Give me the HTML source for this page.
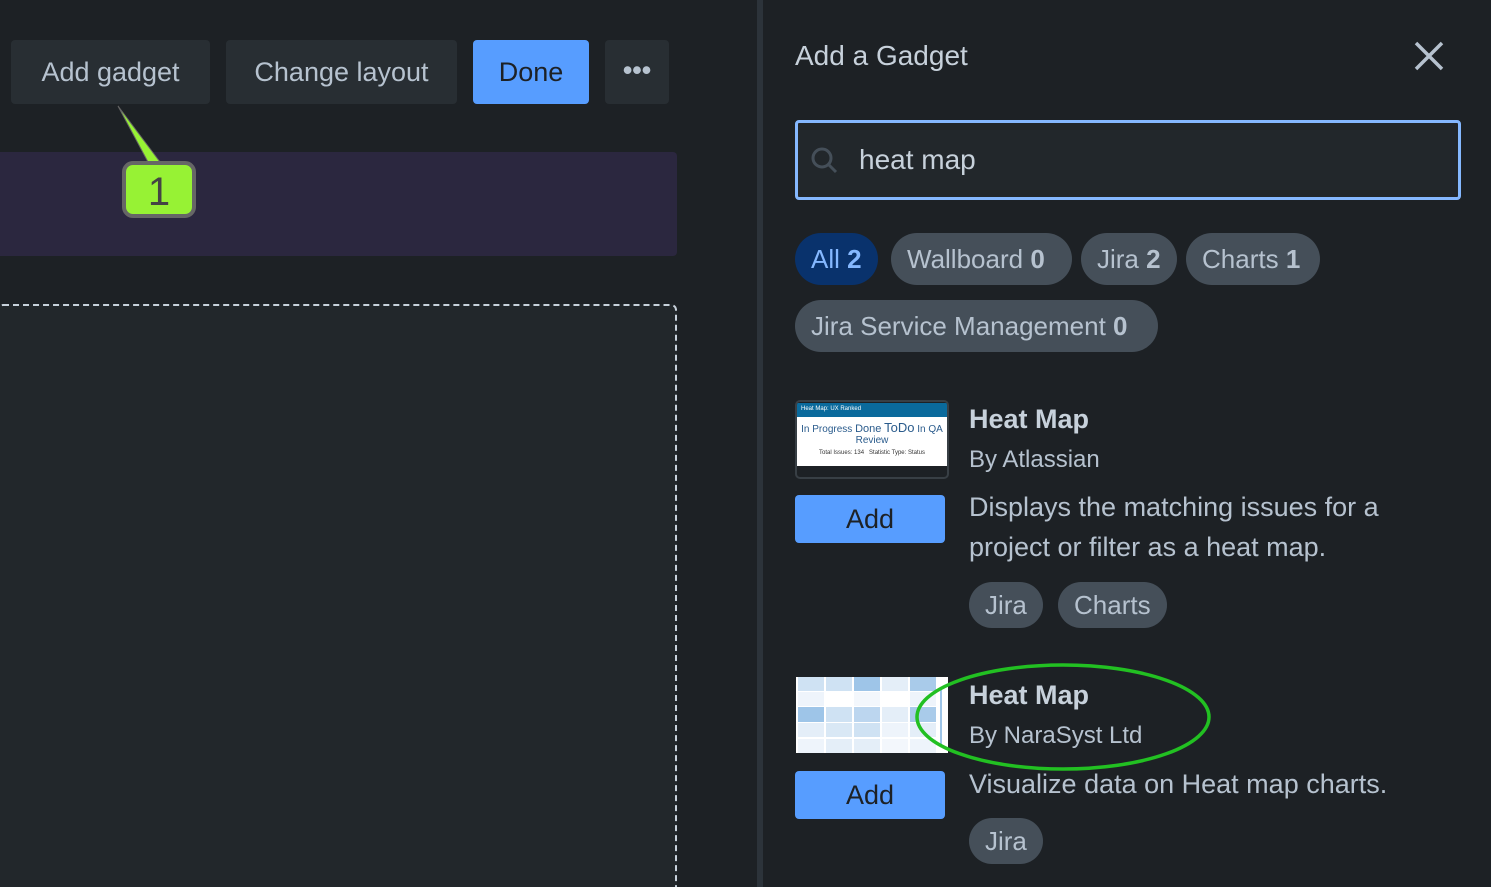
<!DOCTYPE html>
<html style="width:1491px;height:887px;overflow:hidden"><head><meta charset="utf-8"><style>
*{margin:0;padding:0;box-sizing:border-box}
body{width:1491px;height:887px;background:#1d2125;font-family:"Liberation Sans",sans-serif;color:#b6c2cf;position:relative;overflow:hidden}
.a{position:absolute}
.btn{position:absolute;top:40px;height:64px;background:#282e33;border-radius:4px;font-size:27px;line-height:64px;text-align:center;color:#b6c2cf}
.pill{position:absolute;height:52px;border-radius:26px;background:#454f59;font-size:26px;line-height:52px;padding:0 16px;color:#b6c2cf;white-space:nowrap}
.pill b{font-weight:bold}
.t{position:absolute;white-space:nowrap}
.add{position:absolute;left:795px;width:150px;height:48px;background:#579dff;border-radius:4px;color:#1d2125;font-size:27px;line-height:48px;text-align:center}
</style></head><body>
<div class="btn" style="left:11px;width:199px">Add gadget</div>
<div class="btn" style="left:226px;width:231px">Change layout</div>
<div class="btn" style="left:473px;width:116px;background:#579dff;color:#1d2125">Done</div>
<div class="btn" style="left:605px;width:64px;font-weight:bold;line-height:60px">•••</div>
<div class="a" style="left:0;top:152px;width:677px;height:104px;background:#2b273f;border-radius:0 4px 4px 0"></div>
<div class="a" style="left:-3px;top:304px;width:680px;height:600px;background:#22272b;border:2px dashed #c7d1db;border-radius:6px"></div>
<svg class="a" style="left:110px;top:100px" width="100" height="130">
<polygon points="8,6 38,62 50,62" fill="#97f234" stroke="#666" stroke-width="1"/>
<rect x="14" y="63" width="70" height="53" rx="9" fill="#97f234" stroke="#666" stroke-width="4"/>
<text x="49" y="105" font-size="40" text-anchor="middle" fill="#444" font-family="Liberation Sans">1</text>
</svg>
<div class="a" style="left:757px;top:0;width:6px;height:887px;background:#2c333a"></div>
<div class="t" style="left:795px;top:40px;font-size:28px;color:#c7d1db">Add a Gadget</div>
<svg class="a" style="left:1413px;top:40px" width="32" height="32"><path d="M3 3L29 29M29 3L3 29" stroke="#b6c2cf" stroke-width="3.5"/></svg>
<div class="a" style="left:795px;top:120px;width:666px;height:80px;border:3px solid #85b8ff;border-radius:4px;background:#22272b"></div>
<svg class="a" style="left:810px;top:146px" width="30" height="30"><circle cx="12" cy="12" r="9" fill="none" stroke="#454f59" stroke-width="3"/><path d="M19 19L26 26" stroke="#454f59" stroke-width="3"/></svg>
<div class="t" style="left:859px;top:144px;font-size:28px;color:#c7d1db">heat map</div>
<div class="pill" style="left:795px;top:233px;background:#09326c;color:#85b8ff">All <b>2</b></div>
<div class="pill" style="left:891px;top:233px;width:181px">Wallboard <b>0</b></div>
<div class="pill" style="left:1081px;top:233px">Jira <b>2</b></div>
<div class="pill" style="left:1186px;top:233px;width:134px">Charts <b>1</b></div>
<div class="pill" style="left:795px;top:300px;width:363px">Jira Service Management <b>0</b></div>

<div class="a" style="left:795px;top:400px;width:154px;height:79px;border:2px solid #383f45;border-radius:5px;background:#1d2125;overflow:hidden">
<div style="height:14px;background:#0a6a9c;margin-top:1px;font-size:6px;color:#fff;padding:3px 4px">Heat Map: UX Ranked</div>
<div style="background:#fff;height:49px;text-align:center;color:#2a5b8c;font-size:10px;line-height:11px;padding-top:5px">In Progress <span style="font-size:11px">Done</span> <span style="font-size:13px">ToDo</span> In QA<br>Review<br><span style="font-size:6px;color:#333">Total Issues: 134 &nbsp; Statistic Type: Status</span></div>
</div>
<div class="add" style="top:495px">Add</div>
<div class="t" style="left:969px;top:404px;font-size:27px;font-weight:bold;color:#c7d1db">Heat Map</div>
<div class="t" style="left:969px;top:446px;font-size:24px">By Atlassian</div>
<div class="t" style="left:969px;top:487px;font-size:27px;line-height:40px">Displays the matching issues for a<br>project or filter as a heat map.</div>
<div class="pill" style="left:969px;top:582px;height:46px;line-height:46px">Jira</div>
<div class="pill" style="left:1058px;top:582px;height:46px;line-height:46px">Charts</div>

<svg class="a" style="left:796px;top:677px" width="152" height="76">
<rect width="152" height="76" fill="#fff"/>
<g fill="#cfe2f3">
<rect x="2" y="0" width="26" height="14"/><rect x="30" y="0" width="26" height="14"/><rect x="58" y="0" width="26" height="14" fill="#9ec5e8"/><rect x="86" y="0" width="26" height="14" fill="#e4eef8"/><rect x="114" y="0" width="26" height="14" fill="#a9cbea"/>
<rect x="2" y="15" width="26" height="14" fill="#eef4fb"/><rect x="30" y="15" width="26" height="14" fill="#fff"/><rect x="58" y="15" width="26" height="14" fill="#f3f7fc"/><rect x="86" y="15" width="26" height="14" fill="#fff"/><rect x="114" y="15" width="26" height="14" fill="#eef4fb"/>
<rect x="2" y="30" width="26" height="15" fill="#9ec5e8"/><rect x="30" y="30" width="26" height="15"/><rect x="58" y="30" width="26" height="15" fill="#bcd6ef"/><rect x="86" y="30" width="26" height="15" fill="#e4eef8"/><rect x="114" y="30" width="26" height="15" fill="#a9cbea"/>
<rect x="2" y="46" width="26" height="14" fill="#e4eef8"/><rect x="30" y="46" width="26" height="14" fill="#d9e8f5"/><rect x="58" y="46" width="26" height="14"/><rect x="86" y="46" width="26" height="14" fill="#eef4fb"/><rect x="114" y="46" width="26" height="14" fill="#e4eef8"/>
<rect x="2" y="62" width="26" height="14" fill="#eef4fb"/><rect x="30" y="62" width="26" height="14" fill="#e4eef8"/><rect x="58" y="62" width="26" height="14" fill="#e4eef8"/><rect x="86" y="62" width="26" height="14" fill="#f3f7fc"/><rect x="114" y="62" width="26" height="14" fill="#eef4fb"/>
</g>
<rect x="144" y="10" width="2" height="60" fill="#9ec5e8"/>
</svg>
<div class="add" style="top:771px">Add</div>
<div class="t" style="left:969px;top:680px;font-size:27px;font-weight:bold;color:#c7d1db">Heat Map</div>
<div class="t" style="left:969px;top:722px;font-size:24px">By NaraSyst Ltd</div>
<div class="t" style="left:969px;top:764px;font-size:27px;line-height:40px">Visualize data on Heat map charts.</div>
<div class="pill" style="left:969px;top:818px;height:46px;line-height:46px">Jira</div>
<svg class="a" style="left:905px;top:655px" width="320" height="125"><ellipse cx="158" cy="62" rx="146" ry="52" fill="none" stroke="#22c022" stroke-width="3.5"/></svg>
</body></html>
